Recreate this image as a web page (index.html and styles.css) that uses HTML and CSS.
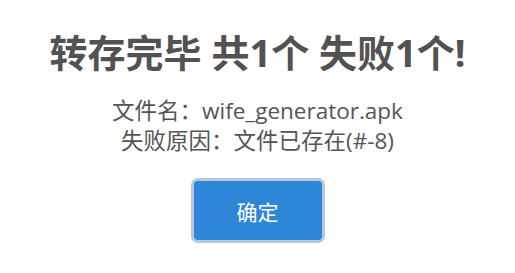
FILE: index.html
```html
<!DOCTYPE html>
<html lang="zh-CN">
<head>
 <meta charset="UTF-8">
 <title>转存结果</title>
 <link rel="stylesheet" href="styles.css">
</head>
<body>
 <div class="result-dialog">
  <h1 class="result-title">转存完毕 共1个 失败1个!</h1>
  <div class="result-info">
   <p>文件名：wife_generator.apk</p>
   <p>失败原因：文件已存在(#-8)</p>
  </div>
  <div class="result-actions">
   <button class="ok-btn">确定</button>
  </div>
 </div>
</body>
</html>
```

FILE: styles.css
```css
body {
 margin: 0;
 background-color: #fff;
 font-family: "Open Sans", "Noto Sans CJK SC", sans-serif;
 color: #555;
}

.result-dialog {
 display: flex;
 flex-direction: column;
 align-items: center;
 padding-top: 26px;
}

.result-title {
 margin: 0;
 font-family: "Noto Sans", "Noto Sans CJK SC", sans-serif;
 font-size: 38px;
 font-weight: bold;
 line-height: 52px;
 color: #525252;
}

.result-info {
 margin-top: 18px;
 text-align: center;
 font-size: 22.5px;
 line-height: 30px;
}

.result-info p {
 margin: 0;
}

.result-actions {
 margin-top: 22px;
}

.ok-btn {
 width: 134px;
 height: 65px;
 border: 3px solid #b5c8de;
 border-radius: 7px;
 background-color: #2e86d8;
 color: #fff;
 font-family: "Noto Sans CJK SC", sans-serif;
 font-size: 21px;
 cursor: pointer;
}
```
